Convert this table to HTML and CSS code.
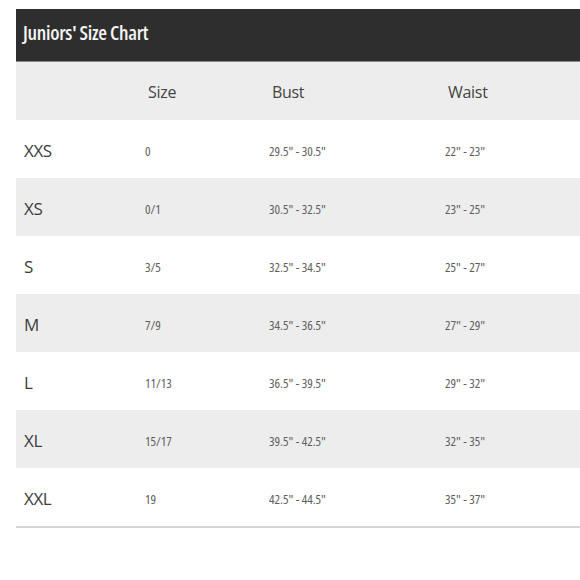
FILE: index.html
```html
<!DOCTYPE html>
<html lang="en">
<head>
<meta charset="utf-8">
<title>Juniors' Size Chart</title>
<link rel="stylesheet" href="styles.css">
</head>
<body>
<div class="chart">
  <div class="chart-title">Juniors' Size Chart</div>
  <div class="row head">
    <div class="cell"></div>
    <div class="cell">Size</div>
    <div class="cell">Bust</div>
    <div class="cell">Waist</div>
  </div>
  <div class="row">
    <div class="cell label">XXS</div>
    <div class="cell val">0</div>
    <div class="cell val">29.5" - 30.5"</div>
    <div class="cell val">22" - 23"</div>
  </div>
  <div class="row alt">
    <div class="cell label">XS</div>
    <div class="cell val">0/1</div>
    <div class="cell val">30.5" - 32.5"</div>
    <div class="cell val">23" - 25"</div>
  </div>
  <div class="row">
    <div class="cell label">S</div>
    <div class="cell val">3/5</div>
    <div class="cell val">32.5" - 34.5"</div>
    <div class="cell val">25" - 27"</div>
  </div>
  <div class="row alt">
    <div class="cell label">M</div>
    <div class="cell val">7/9</div>
    <div class="cell val">34.5" - 36.5"</div>
    <div class="cell val">27" - 29"</div>
  </div>
  <div class="row">
    <div class="cell label">L</div>
    <div class="cell val">11/13</div>
    <div class="cell val">36.5" - 39.5"</div>
    <div class="cell val">29" - 32"</div>
  </div>
  <div class="row alt">
    <div class="cell label">XL</div>
    <div class="cell val">15/17</div>
    <div class="cell val">39.5" - 42.5"</div>
    <div class="cell val">32" - 35"</div>
  </div>
  <div class="row last">
    <div class="cell label">XXL</div>
    <div class="cell val">19</div>
    <div class="cell val">42.5" - 44.5"</div>
    <div class="cell val">35" - 37"</div>
  </div>
</div>
</body>
</html>
```
FILE: styles.css
```css
html, body {
  margin: 0;
  padding: 0;
  background: #ffffff;
}

body {
  font-family: "Open Sans", "Noto Sans", sans-serif;
}

.chart {
  margin: 9px 0 0 16px;
  width: 564px;
}

.chart-title {
  height: 53px;
  box-sizing: border-box;
  background: #2e2e2e;
  border-bottom: 1px solid #8a8a8a;
  color: #f4f4f4;
  font-size: 20px;
  font-weight: 600;
  font-stretch: condensed;
  letter-spacing: -0.3px;
  padding: 0 0 6px 7px;
  display: flex;
  align-items: center;
}

.row {
  display: grid;
  grid-template-columns: 132px 124px 176px 1fr;
  height: 58px;
  align-items: center;
  background: #ffffff;
}

.row.alt,
.row.head {
  background: #ededed;
}

.row.head {
  color: #444444;
  font-size: 16px;
  letter-spacing: -0.3px;
}

.row.last {
  border-bottom: 2px solid #d6d6d6;
}

.cell {
  padding-top: 2px;
}

.label {
  padding-left: 8px;
  font-size: 17px;
  font-weight: 500;
  color: #3d3d3d;
  letter-spacing: -0.4px;
}

.val {
  font-size: 13px;
  color: #5e5e5e;
  font-stretch: condensed;
  padding-top: 4px;
  margin-left: -3px;
}
```
